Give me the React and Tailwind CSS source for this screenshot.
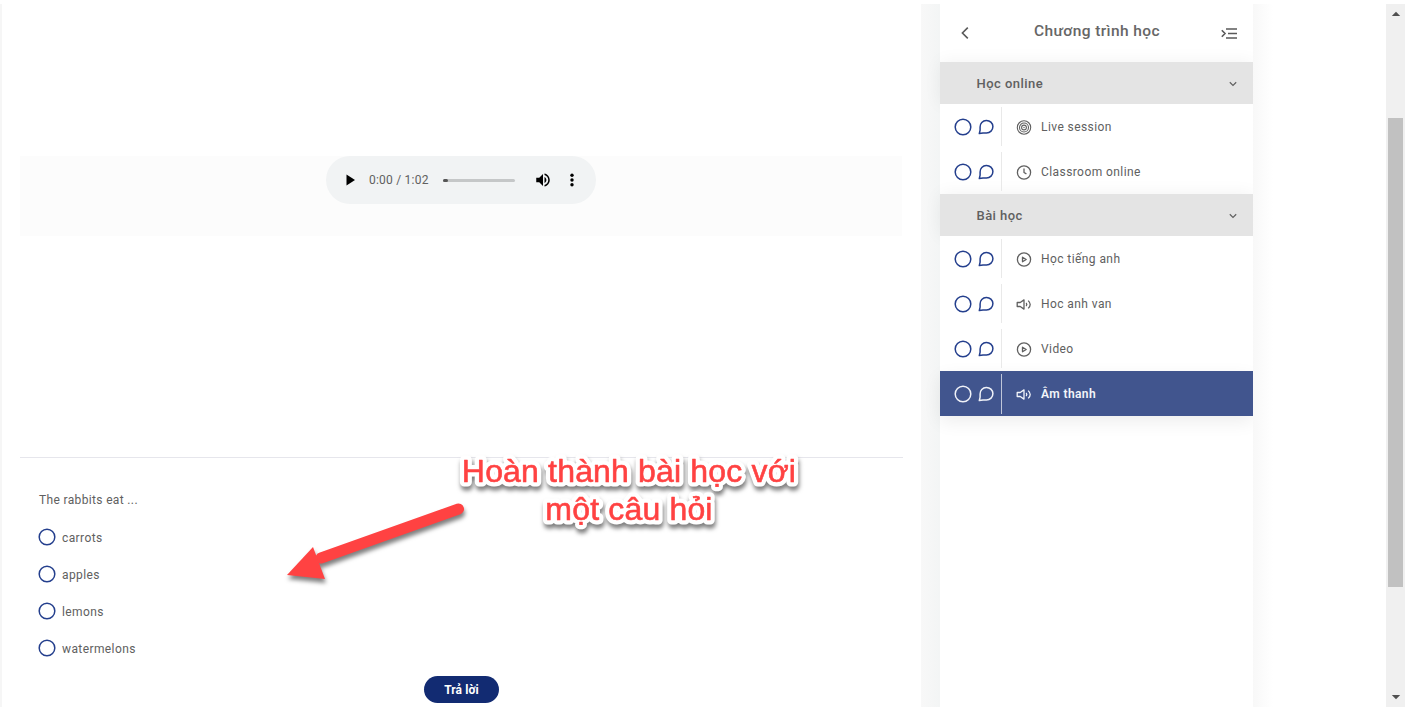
import React from "react";

function Ring({ className = "" }) {
  return (
    <svg viewBox="0 0 18 18" className={"h-[18px] w-[18px] shrink-0 " + className} fill="none" stroke="currentColor" strokeWidth="1.5">
      <circle cx="9" cy="9" r="7.8" />
    </svg>
  );
}

function Chat() {
  return (
    <svg viewBox="0 0 16 16" className="h-4 w-4 shrink-0" fill="none" stroke="currentColor" strokeWidth="1.5" strokeLinejoin="round">
      <path d="M1.3 14.6 L2.1 11.2 V8 A6.4 6.3 0 1 1 8.5 14 H5 Z" />
    </svg>
  );
}

function LessonIcon({ kind }) {
  return (
    <svg viewBox="0 0 16 16" className="h-4 w-4 shrink-0" fill="none" stroke="currentColor" strokeWidth="1.3" strokeLinejoin="round">
      {kind === "live" && (
        <>
          <circle cx="8" cy="8.5" r="6.7" strokeWidth="1.1" />
          <circle cx="8" cy="8.5" r="4.5" strokeWidth="1.1" />
          <circle cx="8" cy="8.5" r="2.4" strokeWidth="1.1" />
          <circle cx="8" cy="8.5" r="0.7" fill="currentColor" stroke="none" />
        </>
      )}
      {kind === "clock" && (
        <>
          <circle cx="8" cy="8.5" r="6.6" />
          <path d="M8 4.5 V8.5 L10.4 9.9" />
        </>
      )}
      {kind === "play" && (
        <>
          <circle cx="8" cy="8.5" r="6.6" />
          <path d="M6.5 6.2 V10.8 L10.2 8.5 Z" />
        </>
      )}
      {kind === "audio" && (
        <>
          <path d="M1.2 6.5 H4.2 L8 3.9 V13.1 L4.2 10.5 H1.2 Z" />
          <path d="M10.2 6.9 Q11.4 8.5 10.2 10.1 M12.2 4.6 Q16.2 8.5 12.2 12.4" />
        </>
      )}
    </svg>
  );
}

function Section({ title }) {
  return (
    <div className="flex h-[42px] items-center justify-between bg-[#e4e4e4] pl-[36.5px] pr-[15px] pt-px text-[#606060] shadow-[0_0_18px_rgba(0,0,0,0.055)]">
      <span className="text-[13px] font-medium tracking-[0.45px]">{title}</span>
      <svg viewBox="0 0 10 8" className="h-2 w-[10px]" fill="none" stroke="currentColor" strokeWidth="1.2">
        <path d="M1.8 2.3 L5 5.4 L8.2 2.3" />
      </svg>
    </div>
  );
}

function Lesson({ kind, title, active }) {
  return (
    <div className={"flex h-[45px] items-center pl-[14px] " + (active ? "bg-[#41558e] text-[#f3f5fa] shadow-[0_6px_18px_rgba(0,0,0,0.07)]" : "bg-white text-[#606060]")}>
      <div className={"flex items-center gap-[6px] " + (active ? "text-[#f0f2f8]" : "text-[#243f8d]")}>
        <Ring />
        <Chat />
      </div>
      <div className={"ml-[7px] w-px " + (active ? "h-10 bg-[#bfc6d9]" : "h-[39px] bg-[#e9e9e9]")} />
      <div className="ml-[14px] flex items-center gap-[9px]">
        <LessonIcon kind={kind} />
        <span className={"text-[12px] " + (active ? "font-semibold tracking-[0.4px]" : "tracking-[0.42px]")}>{title}</span>
      </div>
    </div>
  );
}

function AudioPlayer() {
  return (
    <div className="flex h-12 w-[270px] items-center rounded-full bg-[#f1f3f4]">
      <svg viewBox="0 0 10 12" className="ml-5 h-3 w-[10px]"><path d="M0.5 0.5 V11.5 L9 6 Z" fill="#000" /></svg>
      <span className="ml-[13px] w-[61px] whitespace-nowrap text-[12px] tracking-[0.22px] text-[#606060]">0:00 / 1:02</span>
      <div className="ml-[13px] flex h-[3px] w-[72px] rounded-full bg-[#c5c7c8]">
        <div className="h-[3px] w-[5px] rounded-full bg-[#555]" />
      </div>
      <svg viewBox="0 0 24 24" className="ml-[18.5px] h-[18px] w-[18px]" fill="#000">
        <path d="M3 9v6h4l5 5V4L7 9H3zm13.5 3c0-1.77-1.02-3.29-2.5-4.03v8.05c1.48-.73 2.5-2.25 2.5-4.02zM14 3.23v2.06c2.89.86 5 3.54 5 6.71s-2.11 5.85-5 6.71v2.06c4.01-.91 7-4.49 7-8.77s-2.99-7.86-7-8.77z" />
      </svg>
      <svg viewBox="0 0 6 14" className="ml-[17px] h-[14px] w-[6px]" fill="#000">
        <circle cx="3" cy="2.3" r="1.7" />
        <circle cx="3" cy="7" r="1.7" />
        <circle cx="3" cy="11.7" r="1.7" />
      </svg>
    </div>
  );
}

const calloutLines = [
  { text: "Hoàn thành bài học với", y: 43 },
  { text: "một câu hỏi", y: 80.5 },
];

function Callout() {
  return (
    <svg viewBox="0 0 400 110" className="absolute left-[429px] top-[435px] h-[110px] w-[400px] drop-shadow-[1px_4px_2px_rgba(0,0,0,0.5)] font-['Liberation_Sans',Arial,sans-serif] text-[32px] tracking-[0.17px]" textAnchor="middle" strokeLinejoin="round">
      {calloutLines.map((l) => (
        <text key={l.text} x="200" y={l.y} fill="#fff" stroke="#fff" strokeWidth="9" aria-hidden="true">{l.text}</text>
      ))}
      {calloutLines.map((l) => (
        <text key={l.text} x="200" y={l.y} fill="#ff4242" stroke="#ff4242" strokeWidth="0.6">{l.text}</text>
      ))}
    </svg>
  );
}

export default function App() {
  return (
    <div className="h-[710px] w-[1405px] overflow-hidden bg-white pb-[3px] pt-1 font-[Roboto,sans-serif]">
      <div className="relative flex h-[703px]">
        <div className="w-[2px] bg-[#f6f6f6]" />
        <main className="flex w-[919px] flex-col px-[18px] pt-[152px]">
          <div className="flex h-20 w-[882px] justify-center bg-[#fcfcfc]">
            <AudioPlayer />
          </div>
          <div className="mt-[221px] border-t border-[#e6e6ec]" />
          <div className="pl-[19px] pt-[33px] text-[12px] text-[#606060]">
            <p className="h-[18px] leading-[18px] tracking-[0.35px]">The rabbits eat ...</p>
            <div className="mt-[9px] flex flex-col">
              {["carrots", "apples", "lemons", "watermelons"].map((t) => (
                <label key={t} className="flex h-[37px] items-center gap-[6px]">
                  <Ring className="-ml-[1px] text-[#243f8d]" />
                  <span className="pt-[2px] tracking-[0.4px]">{t}</span>
                </label>
              ))}
            </div>
          </div>
          <button className="mt-[10px] h-[27px] w-[75px] shrink-0 self-center rounded-full bg-[#122b72] text-[12px] font-bold tracking-[0.1px] text-white">Trả lời</button>
        </main>
        <div className="w-[19px] bg-linear-to-r from-[#f8f8f8] to-[#f3f5f5]" />
        <aside className="w-[313px] bg-white">
          <header className="flex h-[58px] items-center justify-between pl-[19px] pr-[15px] text-[#5a5a5a]">
            <svg viewBox="0 0 12 14" className="h-[14px] w-3" fill="none" stroke="currentColor" strokeWidth="1.6"><path d="M8.8 1.6 L3.4 7 L8.8 12.4" /></svg>
            <h1 className="pb-[2px] pl-[3px] text-[15.5px] font-medium tracking-[0.4px] text-[#666]">Chương trình học</h1>
            <svg viewBox="0 0 18 14" className="h-[14px] w-[18px]" fill="none" stroke="currentColor" strokeWidth="1.6">
              <path d="M1.8 4.2 L5 7.5 L1.8 10.8 M6 3 H17 M8 7.5 H17 M6 12 H17" />
            </svg>
          </header>
          <Section title="Học online" />
          <Lesson kind="live" title="Live session" />
          <Lesson kind="clock" title="Classroom online" />
          <Section title="Bài học" />
          <Lesson kind="play" title="Học tiếng anh" />
          <Lesson kind="audio" title="Hoc anh van" />
          <Lesson kind="play" title="Video" />
          <Lesson kind="audio" title="Âm thanh" active />
        </aside>
        <div className="w-[20px] bg-linear-to-r from-[#f8f8f8] to-white" />
        <div className="ml-auto flex w-[19px] flex-col items-center bg-[#f0f0f0]">
          <svg viewBox="0 0 10 6" className="mt-[7px] h-[6px] w-[10px]" fill="#505050"><path d="M0.8 5 L5 0.8 L9.2 5 Z" /></svg>
          <div className="mt-[101px] h-[469px] w-[15px] bg-[#c1c1c1]" />
          <svg viewBox="0 0 10 6" className="mb-[7px] mt-auto h-[6px] w-[10px]" fill="#505050"><path d="M0.8 1 L5 5.2 L9.2 1 Z" /></svg>
        </div>
        <svg viewBox="0 0 190 90" className="absolute left-[280px] top-[491px] h-[90px] w-[190px] drop-shadow-[1px_4px_2px_rgba(0,0,0,0.5)]">
          <path d="M41 63 L178.5 14" stroke="#ff4242" strokeWidth="11" strokeLinecap="round" />
          <path d="M7 80 L33 52 L45 84 Z" fill="#ff4242" />
        </svg>
        <Callout />
      </div>
    </div>
  );
}
